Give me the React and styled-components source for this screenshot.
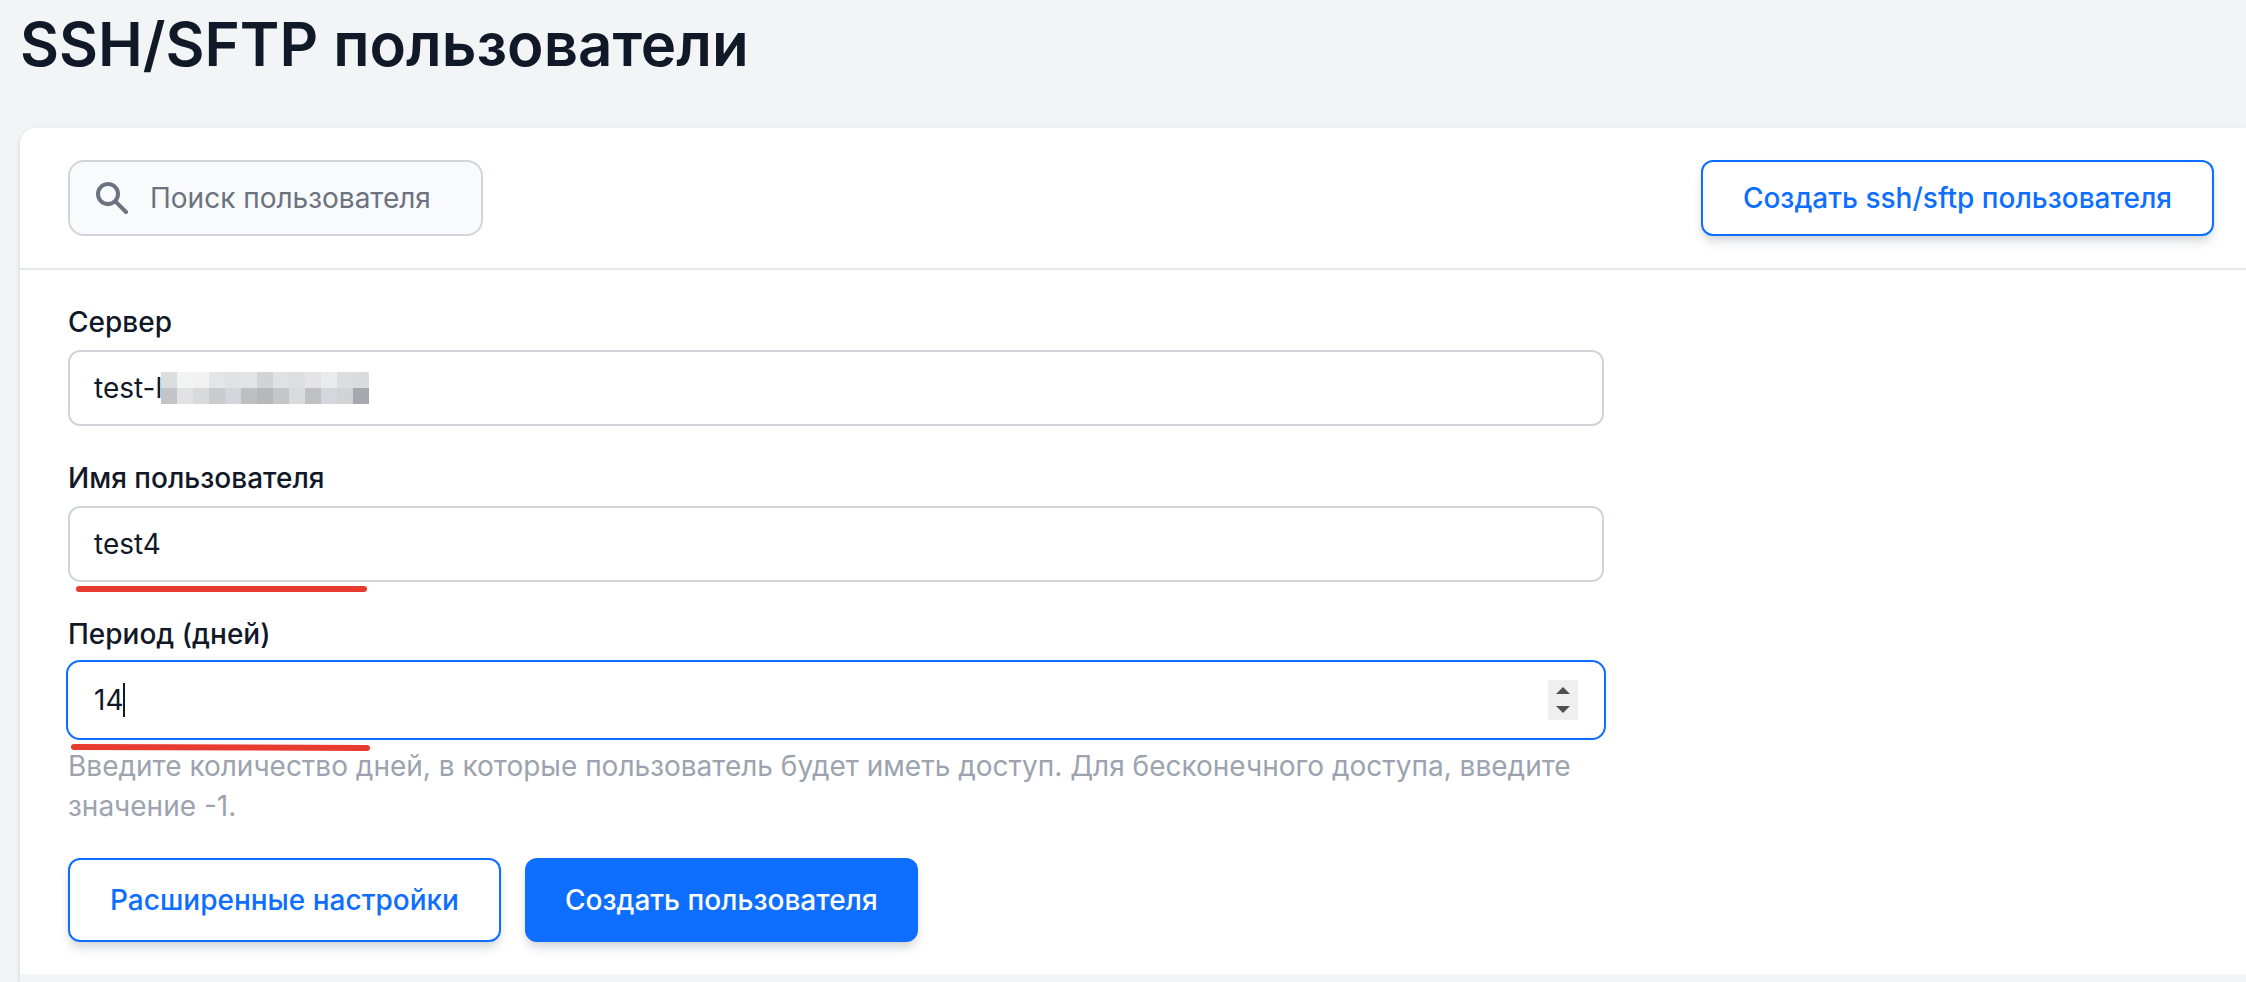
import React, { useState } from "react"
import styled, { createGlobalStyle } from "styled-components"

const GlobalStyle = createGlobalStyle`
	*, *::before, *::after {
		box-sizing: border-box;
	}

	body {
		margin: 0;
		background: #f3f4f6;
		color: #111827;
		font-family: Inter, "Liberation Sans", sans-serif;
		font-size: 28px;
		line-height: 40px;
		overflow-x: hidden;
	}

	input, button {
		font: inherit;
		color: inherit;
	}
`

const Page = styled.main`
	display: flex;
	flex-direction: column;
	min-height: 100vh;
	padding-left: 20px;
`

const Title = styled.h1`
	margin: 0 0 40px;
	font-size: 60px;
	font-weight: 600;
	line-height: 88px;
`

const Card = styled.section`
	flex: 1;
	border-radius: 16px 0 0 0;
	box-shadow: 0 2px 6px rgba(0, 0, 0, 0.1), 0 2px 4px rgba(0, 0, 0, 0.06);
`

const Toolbar = styled.div`
	display: flex;
	align-items: center;
	justify-content: space-between;
	padding: 32px 32px 32px 48px;
	background: #fff;
	border-bottom: 2px solid #e5e7eb;
	border-radius: 16px 0 0 0;
`

const SearchBox = styled.label`
	display: flex;
	align-items: center;
	gap: 18px;
	width: 415px;
	height: 76px;
	padding: 0 22px;
	background: #f9fafb;
	border: 2px solid #d1d5db;
	border-radius: 16px;
	color: #6b7280;

	svg {
		flex: none;
		width: 40px;
		height: 40px;
	}
`

const SearchInput = styled.input`
	flex: 1;
	min-width: 0;
	padding: 0;
	border: 0;
	outline: 0;
	background: transparent;

	&::placeholder {
		color: #6b7280;
		opacity: 1;
	}
`

const Button = styled.button`
	height: ${props => props.$large ? "84px" : "76px"};
	padding: 0 40px;
	background: ${props => props.$primary ? "#0d6eff" : "#fff"};
	border: ${props => props.$primary ? "0" : "2px solid #0d6eff"};
	border-radius: 12px;
	box-shadow: 0 8px 12px -2px rgba(17, 24, 39, 0.12), 0 4px 8px -2px rgba(17, 24, 39, 0.1);
	color: ${props => props.$primary ? "#fff" : "#0d6eff"};
	font-weight: 500;
	cursor: pointer;
`

const FormArea = styled.div`
	padding: 32px 48px;
	background: #fff;
`

const Form = styled.form`
	display: flex;
	flex-direction: column;
	gap: 32px;
	max-width: 1536px;
`

const Field = styled.div`
	position: relative;
	display: flex;
	flex-direction: column;
	gap: 8px;
`

const Label = styled.label`
	font-weight: 500;
`

const Frame = styled.div`
	position: relative;
	display: flex;
	align-items: center;
	height: 76px;
	padding: 0 24px;
	background: #fff;
	border: 2px solid ${props => props.$active ? "#0d6eff" : "#d1d5db"};
	border-radius: 12px;
	${props => props.$active && `
		height: 80px;
		margin: -2px;
		padding: 0 26px;
		border-radius: 14px;
	`}
`

const TextInput = styled.input`
	flex: 1;
	min-width: 0;
	padding: 0;
	border: 0;
	outline: 0;
	background: transparent;
`

const NumberInput = styled.input`
	field-sizing: content;
	padding: 0;
	border: 0;
	outline: 0;
	background: transparent;
	caret-color: transparent;
	appearance: textfield;

	&::-webkit-inner-spin-button {
		display: none;
	}
`

const Caret = styled.span`
	width: 2px;
	height: 34px;
	background: #111827;
`

const Spinner = styled.div`
	display: grid;
	width: 30px;
	height: 40px;
	margin-left: auto;
	background: #efefef;
`

const SpinButton = styled.button`
	display: flex;
	justify-content: center;
	align-items: ${props => props.$down ? "start" : "end"};
	height: 20px;
	padding: 6px 0;
	border: 0;
	background: transparent;

	svg {
		width: 14px;
		height: 7px;
	}
`

const Hint = styled.p`
	margin: 0;
	color: #9ca3af;
`

const Actions = styled.div`
	display: flex;
	gap: 24px;
`

const Mosaic = styled.div`
	position: absolute;
	top: 20px;
	left: 91px;
	display: grid;
	grid-template-columns: repeat(13, 16px);
	grid-auto-rows: 16px;
`

const MosaicCell = styled.span`
	background: ${props => props.$color};
`

const Underline = styled.svg`
	position: absolute;
	top: ${props => props.$top};
	left: 0;
	width: 320px;
	height: 10px;
	pointer-events: none;
`

const mosaicColors = [
	"#dcddde", "#f2f4f3", "#f2f2f2", "#e4e5e7", "#e1e2e4", "#e3e4e6", "#d2d3d5", "#e0e1e3", "#dddee0", "#e4e4e6", "#eaebec", "#dcdddf", "#dadbdc",
	"#c3c4c8", "#e1e2e4", "#d8d9da", "#cacbcf", "#d5d6db", "#bebfc3", "#b7b8bc", "#c5c6ca", "#dadbdc", "#bfc0c4", "#d6d7dc", "#d2d3d7", "#a5a8ad",
]

const SearchIcon = () => (
	<svg viewBox="0 0 20 20" fill="currentColor" aria-hidden="true">
		<path fillRule="evenodd" clipRule="evenodd" d="M8 4a4 4 0 100 8 4 4 0 000-8zM2 8a6 6 0 1110.89 3.476l4.817 4.817a1 1 0 01-1.414 1.414l-4.816-4.816A6 6 0 012 8z" />
	</svg>
)

// red marker stroke under a field
const Marker = ({ top, x1, x2, y2 = 5 }) => (
	<Underline $top={top} viewBox="0 0 320 10" aria-hidden="true">
		<line x1={x1} y1="5" x2={x2} y2={y2} stroke="#e63b2e" strokeWidth="6" strokeLinecap="round" />
	</Underline>
)

export default function App() {
	const [server, setServer] = useState("test-l")
	const [user, setUser] = useState("test4")
	const [days, setDays] = useState(14)

	return (
		<Page>
			<GlobalStyle />
			<Title>SSH/SFTP пользователи</Title>
			<Card>
				<Toolbar>
					<SearchBox>
						<SearchIcon />
						<SearchInput type="text" aria-label="Поиск пользователя" placeholder="Поиск пользователя" />
					</SearchBox>
					<Button type="button">Создать ssh/sftp пользователя</Button>
				</Toolbar>
				<FormArea>
					<Form onSubmit={(e) => e.preventDefault()}>
						<Field>
							<Label htmlFor="server">Сервер</Label>
							<Frame>
								<TextInput id="server" type="text" value={server} onChange={(e) => setServer(e.target.value)} />
								<Mosaic aria-hidden="true">
									{mosaicColors.map((color, i) => <MosaicCell key={i} $color={color} />)}
								</Mosaic>
							</Frame>
						</Field>
						<Field>
							<Label htmlFor="user">Имя пользователя</Label>
							<Frame>
								<TextInput id="user" type="text" value={user} onChange={(e) => setUser(e.target.value)} />
							</Frame>
							<Marker top="126px" x1={11} x2={296} />
						</Field>
						<Field>
							<Label htmlFor="days">Период (дней)</Label>
							<Frame $active>
								<NumberInput id="days" type="number" value={days} onChange={(e) => setDays(Number(e.target.value))} />
								<Caret />
								<Spinner>
									<SpinButton type="button" aria-label="Больше" onClick={() => setDays(days + 1)}>
										<svg viewBox="0 0 14 7"><path d="M7 0l7 7H0z" fill="#505050" /></svg>
									</SpinButton>
									<SpinButton type="button" $down aria-label="Меньше" onClick={() => setDays(days - 1)}>
										<svg viewBox="0 0 14 7"><path d="M0 0h14L7 7z" fill="#505050" /></svg>
									</SpinButton>
								</Spinner>
							</Frame>
							<Marker top="128px" x1={6} x2={299} y2={6} />
							<Hint>Введите количество дней, в которые пользователь будет иметь доступ. Для бесконечного доступа, введите значение -1.</Hint>
						</Field>
						<Actions>
							<Button type="button" $large>Расширенные настройки</Button>
							<Button type="submit" $large $primary>Создать пользователя</Button>
						</Actions>
					</Form>
				</FormArea>
			</Card>
		</Page>
	)
}
